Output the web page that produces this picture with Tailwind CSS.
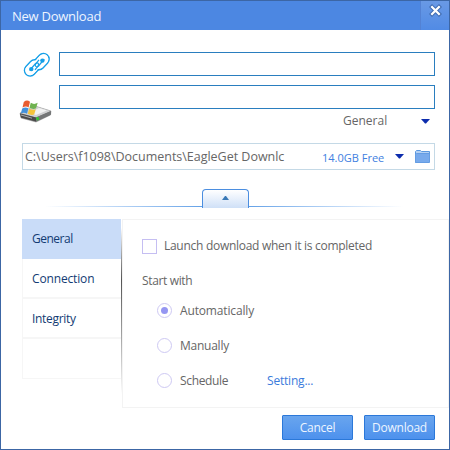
<!DOCTYPE html>
<html lang="en">
<head>
<meta charset="utf-8">
<title>New Download</title>
<script src="https://cdn.jsdelivr.net/npm/@tailwindcss/browser@4"></script>
</head>
<body class="bg-white overflow-hidden">
<main class="w-[450px] h-[450px] border border-[#3c66a5] bg-white flex flex-col font-['Open_Sans','Noto_Sans',sans-serif] text-[12px] leading-4 text-[#666] whitespace-nowrap overflow-hidden">
  <header class="h-[29px] shrink-0 flex justify-between bg-[#4c87e2] text-white">
    <h1 class="pl-[11px] pt-[7px] text-[13px] leading-4 tracking-[-0.25px] text-[#eef5ff]">New Download</h1>
    <button aria-label="Close" class="w-[29px] h-[29px] border-l border-[#5382d4] bg-linear-to-b from-[#6999e5] to-[#518be5] flex justify-center pt-[3px]">
      <svg width="13" height="13" viewBox="0 0 13 13"><path d="M3 3 10 10M10 3 3 10" stroke="#3f6bb0" stroke-width="4.2" stroke-linecap="square"/><path d="M2.3 2.3 10.7 10.7M10.7 2.3 2.3 10.7" stroke="#fff" stroke-width="2.3"/></svg>
    </button>
  </header>

  <section class="pt-[22px] pl-[21px] pr-[14px] flex flex-col">
    <div class="flex h-[33px]">
      <svg class="w-[37px] h-[24px] shrink-0 overflow-visible" viewBox="0 0 37 24" fill="none" stroke="#16a0e8" stroke-width="1.5">
        <rect x="-9" y="-5.6" width="18" height="11.2" rx="5.6" transform="translate(10.4 15.9) rotate(-47)"/>
        <rect x="-9" y="-5.6" width="18" height="11.2" rx="5.6" transform="translate(19.2 9.6) rotate(-47)"/>
        <rect x="-8.2" y="-4.8" width="16.4" height="9.6" rx="4.8" transform="translate(10.4 15.9) rotate(-47)" fill="#fff" stroke="none"/>
        <rect x="-8.2" y="-4.8" width="16.4" height="9.6" rx="4.8" transform="translate(19.2 9.6) rotate(-47)" fill="#fff" stroke="none"/>
        <path d="M7.6 18.4 13.4 11.7Q15.5 9.9 16.4 11.7 17 13 15.8 14.4L13 17.8" stroke-width="1.3"/>
        <path d="M22.2 7.2 16.5 14Q14.6 15.6 13.5 14 12.9 12.7 14.1 11.3L17 7.8" stroke-width="1.3"/>
        <circle cx="9.3" cy="17.1" r="2.2" fill="#16a0e8" stroke="none"/>
        <circle cx="20.4" cy="8.6" r="2.2" fill="#16a0e8" stroke="none"/>
      </svg>
      <input aria-label="Address" class="w-[376px] h-[24px] border border-[#2a7ebf] bg-white">
    </div>
    <div class="flex h-[24px]">
      <svg class="w-[37px] h-[40px] shrink-0 overflow-visible" viewBox="0 0 37 40">
        <path d="M-2 28 13 21 29 26 28.5 30 14 37 -1 33Z" fill="#777" stroke="#8d8d8d" stroke-width=".5"/>
        <path d="M-2 28 13 21 29 26 14 32.5Z" fill="#cfd0d1"/>
        <path d="M7 28 17 23 25 25.5 14 30Z" fill="#f2f2f2"/>
        <path d="M14 32.5 29 26V29.5L14 36.5Z" fill="#747677"/>
        <path d="M-2 28.5 14 32.5V36.5L-1 32.5Z" fill="#4a4a4a"/>
        <path d="m-1 30 11 3.2" stroke="#aaa"/>
        <path d="M14.5 34.2 16.8 33.2" stroke="#31c831" stroke-width="3"/>
        <path d="M1.8 16.9Q5 14.4 8 16.8L6.6 22.4Q4 20.5.5 22.5Z" fill="#e85c30"/>
        <path d="M8.8 17.8Q12 20 15.7 17.8L14 23.3Q11 24.7 7.5 22.8Z" fill="#6fb250"/>
        <path d="M.2 23.4Q3.5 21.5 6.4 23.3L5 28.7Q2 26.7-1.2 28.5Z" fill="#4391da"/>
        <path d="M7.2 23.8Q10.7 25.5 13.8 24.2L12.2 29.6Q9 30.6 5.8 28.8Z" fill="#f5c33c"/>
      </svg>
      <input aria-label="File name" class="w-[376px] h-[24px] border border-[#2a7ebf] bg-white">
    </div>
    <div class="h-[34px] pt-[4px] pr-[5px] flex justify-end">
      <span class="w-[78px]">General</span>
      <svg class="mt-[6px]" width="9" height="5"><path d="M0 0H9L5 4.5H4Z" fill="#0c2cad"/></svg>
    </div>
    <div class="h-[27px] border border-[#c4d9e6] flex">
      <span class="w-[299px] pl-[2px] pt-[5px]"><span class="block w-[260px] overflow-hidden text-[12.5px] tracking-[-0.02px]">C:\Users\f1098\Documents\EagleGet Downlc</span></span>
      <span class="w-[73px] pt-[6px] text-[11px] text-[#4180df]">14.0GB Free</span>
      <svg class="mt-[10px] mr-[11px]" width="9" height="5"><path d="M0 0H9L5 4.5H4Z" fill="#0c2cad"/></svg>
      <svg class="mt-[6px]" width="16" height="14"><path d="M.5 12.5V1.5L1.5.5H5.5L6.5 1.5H14.5V4" fill="#b4d1f4" stroke="#5b98df"/><path d="M.5 12.5V4.5L1.5 3.5H14.5V12.5Z" fill="#78aaec" stroke="#659de3"/></svg>
    </div>
  </section>

  <div class="h-[49px] shrink-0 pt-[19px] pl-[44px] flex items-start">
    <div class="w-[157px] mt-[17px] h-px bg-linear-to-r from-white to-[#65a2e7]"></div>
    <button aria-label="Collapse options" class="w-[47px] h-[19px] border border-b-0 border-[#4b8ee0] rounded-t-[4px] bg-linear-to-b from-white to-[#cfe0f7] flex justify-center pt-[6px]"><svg width="7" height="4"><path d="M3 0H4L7 4H0Z" fill="#3979b7"/></svg></button>
    <div class="w-[154px] mt-[17px] h-px bg-linear-to-r from-[#65a2e7] to-white"></div>
  </div>

  <section class="flex h-[189px] shrink-0 pl-[21px]">
    <nav class="w-[99px] h-[160px] border-l border-b border-[#f6f6f6] text-[#123b73] tracking-[-0.15px]">
      <div class="h-[40px] -ml-px pl-[10px] pt-[12px] bg-[#c9dcf8] tracking-[-0.5px]">General</div>
      <div class="h-[40px] pl-[9px] pt-[12px] border-b-2 border-[#f6f6f6]">Connection</div>
      <div class="h-[40px] pl-[9px] pt-[12px] border-b-2 border-[#f6f6f6] tracking-[-0.3px]">Integrity</div>
    </nav>
    <div class="w-px h-[175px] bg-linear-to-b from-white from-5% via-[#555] via-35% to-white"></div>
    <div class="w-[327px] h-[189px] border border-[#f3f3f3] pl-[19px] pt-[19px] flex flex-col">
      <label class="flex h-[35px]"><span class="size-[15px] border border-[#c5bef2] mr-[7px]"></span><span class="-mt-px tracking-[-0.28px]">Launch download when it is completed</span></label>
      <span class="h-[29px] -mt-px tracking-[-0.35px]">Start with</span>
      <label class="pl-[15px] h-[35px] flex tracking-[-0.15px]"><span class="size-[15px] mt-px mr-[8px] rounded-full border border-[#cec9f3] flex items-center justify-center"><span class="size-[7px] rounded-full bg-[#9596f2]"></span></span><span class="pt-px">Automatically</span></label>
      <label class="pl-[15px] h-[35px] flex tracking-[-0.25px]"><span class="size-[15px] mt-px mr-[8px] rounded-full border border-[#cec9f3]"></span><span class="pt-px">Manually</span></label>
      <div class="pl-[15px] flex tracking-[-0.35px]"><span class="size-[15px] mt-px mr-[8px] rounded-full border border-[#cec9f3]"></span><span class="w-[87px] pt-px">Schedule</span><a class="pt-px tracking-[-0.2px] text-[#3b7bdc]">Setting...</a></div>
    </div>
  </section>

  <footer class="flex justify-end gap-[11px] pt-[7px] pr-[14px] text-[#edf5ff] text-center tracking-[-0.25px]">
    <button class="w-[71px] h-[25px] rounded-[1px] border border-[#2b78d9] bg-linear-to-b from-[#69a5ee] to-[#4d91ed]">Cancel</button>
    <button class="w-[71px] h-[25px] rounded-[1px] border border-[#2b78d9] bg-linear-to-b from-[#69a5ee] to-[#4d91ed]">Download</button>
  </footer>
</main>
</body>
</html>
